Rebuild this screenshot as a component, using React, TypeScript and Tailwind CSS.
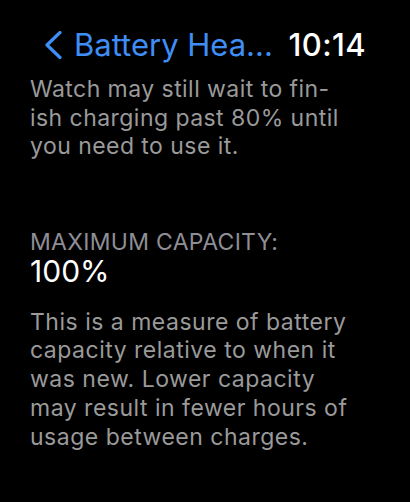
import React from "react";

const font = { fontFamily: "Inter, 'Noto Sans', sans-serif" };

function Lines({ lines, className }: { lines: string[]; className: string }) {
  return (
    <div className={className}>
      {lines.map((l) => (
        <div key={l} className="whitespace-nowrap">
          {l}
        </div>
      ))}
    </div>
  );
}

export default function App() {
  return (
    <div className="w-[410px] h-[502px] bg-black overflow-hidden pl-[30px]" style={font}>
      {/* navigation bar */}
      <div className="flex items-center h-[40px] mt-[25px]">
        <svg width="20" height="28" viewBox="0 0 20 28" className="ml-[13px] shrink-0">
          <path d="M17 1.5 L4 14 L17 26.5" fill="none" stroke="#3f8ef5" strokeWidth="3.2" strokeLinecap="round" strokeLinejoin="round" />
        </svg>
        <span className="ml-[11px] text-[31px] leading-[40px] text-[#3f8ef5] whitespace-nowrap">
          Battery Hea...
        </span>
        <span className="ml-auto mr-[44px] text-[31px] leading-[40px] text-white font-medium tracking-[0.4px] whitespace-nowrap">
          10:14
        </span>
      </div>

      <Lines
        className="mt-[10px] text-[23px] leading-[28.5px] text-[#9a9a9a] tracking-[0.45px]"
        lines={["Watch may still wait to fin-", "ish charging past 80% until", "you need to use it."]}
      />

      <div className="mt-[67px] text-[23px] leading-[28px] text-[#8e8e96] tracking-[0.3px]">MAXIMUM CAPACITY:</div>
      <div className="-mt-[1px] text-[30px] leading-[32px] text-white">100%</div>

      <Lines
        className="mt-[21px] text-[23px] leading-[28.75px] text-[#9a9a9a] tracking-[0.5px]"
        lines={[
          "This is a measure of battery",
          "capacity relative to when it",
          "was new. Lower capacity",
          "may result in fewer hours of",
          "usage between charges.",
        ]}
      />
    </div>
  );
}
